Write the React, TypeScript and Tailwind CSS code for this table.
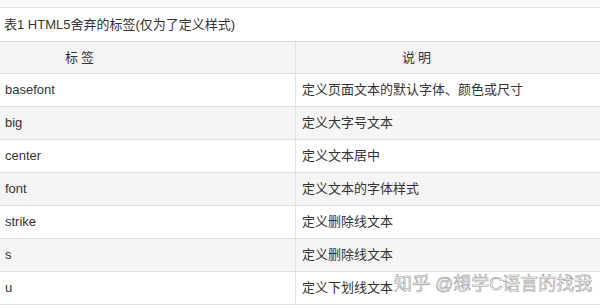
const rows = [
  { tag: 'basefont', desc: '定义页面文本的默认字体、颜色或尺寸' },
  { tag: 'big', desc: '定义大字号文本' },
  { tag: 'center', desc: '定义文本居中' },
  { tag: 'font', desc: '定义文本的字体样式' },
  { tag: 'strike', desc: '定义删除线文本' },
  { tag: 's', desc: '定义删除线文本' },
  { tag: 'u', desc: '定义下划线文本' },
];

export default function App() {
  return (
    <div
      className="relative w-[600px] h-[308px] overflow-hidden bg-white text-[13px] text-[#333]"
      style={{ fontFamily: '"Liberation Sans", Arial, "Noto Sans CJK SC", sans-serif' }}
    >
      <div className="h-[8px] bg-[#fbfbfb] border-b border-[#e4e4e4]" />
      {/* caption */}
      <div className="h-[34px] flex items-center pl-[4px] border-b border-[#dcdcdc]">
        表1 HTML5舍弃的标签(仅为了定义样式)
      </div>
      {/* header */}
      <div className="h-[32px] flex bg-[#f4f4f4] border-b border-[#dedede]">
        <div className="w-[296px] flex items-center pl-[65px] border-r border-[#e2e2e2] tracking-[3px]">标签</div>
        <div className="flex-1 flex items-center pl-[106px] tracking-[3px]">说明</div>
      </div>
      {rows.map((r, i) => (
        <div
          key={r.tag + i}
          className={`h-[33px] flex border-b border-[#dedede] ${i % 2 === 1 ? 'bg-[#f5f5f5]' : 'bg-white'}`}
        >
          <div className="w-[296px] flex items-center pl-[5px] border-r border-[#e2e2e2]">{r.tag}</div>
          <div className="flex-1 flex items-center pl-[6px]">{r.desc}</div>
        </div>
      ))}
      {/* watermark */}
      <div
        className="absolute left-[394px] top-[275px] text-[18px] leading-none whitespace-nowrap text-white/80"
        style={{ WebkitTextStroke: '0.6px #9a9a9a' }}
      >
        知乎 @想学C语言的找我
      </div>
    </div>
  );
}
